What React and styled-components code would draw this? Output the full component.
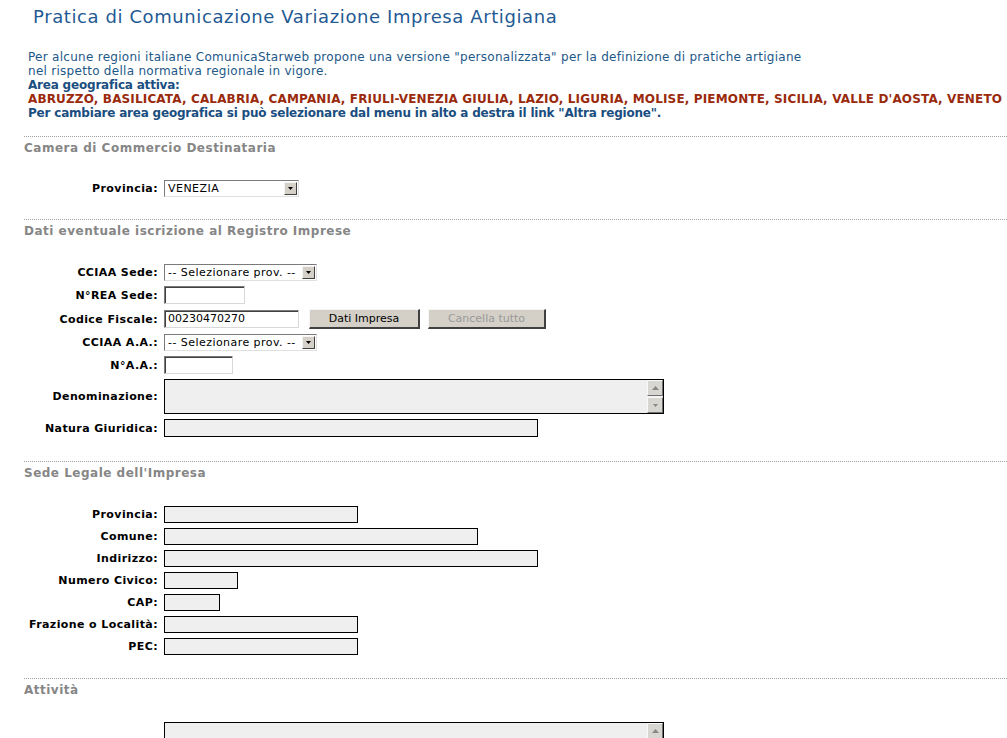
import React from "react";
import styled, { createGlobalStyle } from "styled-components";

const Global = createGlobalStyle`
  html, body { margin: 0; padding: 0; background: #fff; }
  body { font-family: "DejaVu Sans", Verdana, sans-serif; font-size: 11px; color: #000; }
`;

const Page = styled.div`
  width: 1007px;
  height: 738px;
  overflow: hidden;
  padding-top: 6px;
  box-sizing: border-box;
`;

const Title = styled.h1`
  margin: 0 0 0 33px;
  font-size: 18px;
  letter-spacing: 0.6px;
  font-weight: normal;
  line-height: 22px;
  color: #1f5a93;
`;

const Intro = styled.div`
  margin: 22px 0 0 28px;
  font-size: 12px;
  letter-spacing: 0.28px;
  line-height: 14px;
  color: #1d5888;
  white-space: nowrap;
`;

const Strong = styled.div`
  font-weight: bold;
  letter-spacing: ${(p) => (p.$red ? "0.15px" : "-0.2px")};
  color: ${(p) => (p.$red ? "#9a2a0c" : "#1a4e80")};
`;

const Section = styled.section`
  margin: ${(p) => p.$top || 16}px 0 0 24px;
  border-top: 1px dotted #a0a0a0;
`;

const SectionTitle = styled.h2`
  margin: 4px 0 0 0;
  font-size: 12px;
  letter-spacing: 0.5px;
  line-height: 14px;
  font-weight: bold;
  color: #868686;
`;

const Form = styled.div`
  display: flex;
  flex-direction: column;
  gap: ${(p) => p.$gap || 5}px;
  margin-top: ${(p) => p.$top || 24}px;
`;

const Row = styled.div`
  display: flex;
  align-items: ${(p) => (p.$top ? "flex-start" : "center")};
  height: ${(p) => p.$h || 17}px;
`;

const Label = styled.label`
  width: 134px;
  text-align: right;
  font-weight: bold;
  letter-spacing: 0.4px;
  padding-right: 6px;
  flex: none;
  white-space: nowrap;
`;

const TextInput = styled.div`
  width: ${(p) => p.$w}px;
  height: ${(p) => p.$h || 18}px;
  box-sizing: border-box;
  border-top: 1px solid #7a7a7a;
  border-left: 1px solid #7a7a7a;
  border-right: 1px solid #d8d8d8;
  border-bottom: 1px solid #d8d8d8;
  box-shadow: inset 1px 1px 0 #404040;
  background: #fff;
  font-size: 11px;
  line-height: 16px;
  padding-left: 3px;
  flex: none;
`;

const ReadOnly = styled.div`
  width: ${(p) => p.$w}px;
  height: ${(p) => p.$h || 17}px;
  box-sizing: border-box;
  border: 1px solid #000;
  background: #efefef;
  flex: none;
  position: relative;
`;

const SelectBox = styled.div`
  width: ${(p) => p.$w}px;
  height: 17px;
  box-sizing: border-box;
  border-top: 1px solid #7a7a7a;
  border-left: 1px solid #7a7a7a;
  border-right: 1px solid #e0e0e0;
  border-bottom: 1px solid #e0e0e0;
  background: #fff;
  display: flex;
  align-items: center;
  flex: none;
  padding: 1px;
`;

const SelectText = styled.span`
  flex: 1;
  padding-left: 2px;
  font-size: 11px;
  letter-spacing: 0.45px;
  line-height: 13px;
  white-space: nowrap;
  overflow: hidden;
`;

const ArrowBtn = styled.span`
  width: 13px;
  height: 13px;
  box-sizing: border-box;
  background: #d4d0c8;
  border-top: 1px solid #f4f4f4;
  border-left: 1px solid #f4f4f4;
  border-right: 1px solid #404040;
  border-bottom: 1px solid #404040;
  display: flex;
  align-items: center;
  justify-content: center;
  flex: none;
`;

const Button = styled.button`
  width: ${(p) => p.$w}px;
  height: 20px;
  margin-left: ${(p) => p.$ml || 0}px;
  box-sizing: border-box;
  background: #d4d0c8;
  border-top: 1px solid #f6f6f6;
  border-left: 1px solid #f6f6f6;
  border-right: 2px solid #404040;
  border-bottom: 2px solid #404040;
  font-family: "DejaVu Sans", Verdana, sans-serif;
  font-size: 11px;
  color: ${(p) => (p.disabled ? "#9a9a9a" : "#000")};
  padding: 0;
  flex: none;
`;

const Scroll = styled.div`
  position: absolute;
  right: 0;
  top: 0;
  bottom: 0;
  width: 16px;
  display: flex;
  flex-direction: column;
  justify-content: space-between;
  background: #f0f0f0;
`;

const ScrollBtn = styled.span`
  width: 16px;
  height: 16px;
  box-sizing: border-box;
  background: #d8d6d0;
  border-top: 1px solid #f8f8f8;
  border-left: 1px solid #f8f8f8;
  border-right: 1px solid #707070;
  border-bottom: 1px solid #707070;
  display: flex;
  align-items: center;
  justify-content: center;
`;

const Down = ({ c = "#000" }) => (
  <svg width="5" height="3" viewBox="0 0 5 3"><path d="M0 0h5L2.5 3z" fill={c} /></svg>
);
const Up = ({ c = "#888" }) => (
  <svg width="7" height="4" viewBox="0 0 7 4"><path d="M0 4h7L3.5 0z" fill={c} /></svg>
);

const Select = ({ w, text }) => (
  <SelectBox $w={w}>
    <SelectText>{text}</SelectText>
    <ArrowBtn><Down /></ArrowBtn>
  </SelectBox>
);

const TextArea = ({ w, h, showDown = true }) => (
  <ReadOnly $w={w} $h={h}>
    <Scroll>
      <ScrollBtn><Up /></ScrollBtn>
      {showDown && <ScrollBtn><Down c="#888" /></ScrollBtn>}
    </Scroll>
  </ReadOnly>
);

export default function App() {
  return (
    <Page>
      <Global />
      <Title>Pratica di Comunicazione Variazione Impresa Artigiana</Title>
      <Intro>
        <div>Per alcune regioni italiane ComunicaStarweb propone una versione "personalizzata" per la definizione di pratiche artigiane</div>
        <div>nel rispetto della normativa regionale in vigore.</div>
        <Strong>Area geografica attiva:</Strong>
        <Strong $red>ABRUZZO, BASILICATA, CALABRIA, CAMPANIA, FRIULI-VENEZIA GIULIA, LAZIO, LIGURIA, MOLISE, PIEMONTE, SICILIA, VALLE D'AOSTA, VENETO</Strong>
        <Strong>Per cambiare area geografica si può selezionare dal menu in alto a destra il link "Altra regione".</Strong>
      </Intro>

      <Section $top={16}>
        <SectionTitle>Camera di Commercio Destinataria</SectionTitle>
        <Form $top={24}>
          <Row $h={18}>
            <Label>Provincia:</Label>
            <Select w={135} text="VENEZIA" />
          </Row>
        </Form>
      </Section>

      <Section $top={22}>
        <SectionTitle>Dati eventuale iscrizione al Registro Imprese</SectionTitle>
        <Form $top={26} $gap={5}>
          <Row $h={17}>
            <Label>CCIAA Sede:</Label>
            <Select w={153} text="-- Selezionare prov. --" />
          </Row>
          <Row $h={18}>
            <Label>N°REA Sede:</Label>
            <TextInput $w={81} />
          </Row>
          <Row $h={20}>
            <Label>Codice Fiscale:</Label>
            <TextInput $w={135}>00230470270</TextInput>
            <Button $w={111} $ml={10}>Dati Impresa</Button>
            <Button $w={118} $ml={8} disabled>Cancella tutto</Button>
          </Row>
          <Row $h={17}>
            <Label>CCIAA A.A.:</Label>
            <Select w={153} text="-- Selezionare prov. --" />
          </Row>
          <Row $h={18}>
            <Label>N°A.A.:</Label>
            <TextInput $w={69} />
          </Row>
          <Row $h={35}>
            <Label>Denominazione:</Label>
            <TextArea w={500} h={35} />
          </Row>
          <Row $h={18}>
            <Label>Natura Giuridica:</Label>
            <ReadOnly $w={374} $h={18} />
          </Row>
        </Form>
      </Section>

      <Section $top={24}>
        <SectionTitle>Sede Legale dell'Impresa</SectionTitle>
        <Form $top={26} $gap={5}>
          <Row><Label>Provincia:</Label><ReadOnly $w={194} /></Row>
          <Row><Label>Comune:</Label><ReadOnly $w={314} /></Row>
          <Row><Label>Indirizzo:</Label><ReadOnly $w={374} /></Row>
          <Row><Label>Numero Civico:</Label><ReadOnly $w={74} /></Row>
          <Row><Label>CAP:</Label><ReadOnly $w={56} /></Row>
          <Row><Label>Frazione o Località:</Label><ReadOnly $w={194} /></Row>
          <Row><Label>PEC:</Label><ReadOnly $w={194} /></Row>
        </Form>
      </Section>

      <Section $top={23}>
        <SectionTitle>Attività</SectionTitle>
        <Form $top={25}>
          <Row $h={40} $top>
            <Label />
            <TextArea w={500} h={40} showDown={false} />
          </Row>
        </Form>
      </Section>
    </Page>
  );
}
